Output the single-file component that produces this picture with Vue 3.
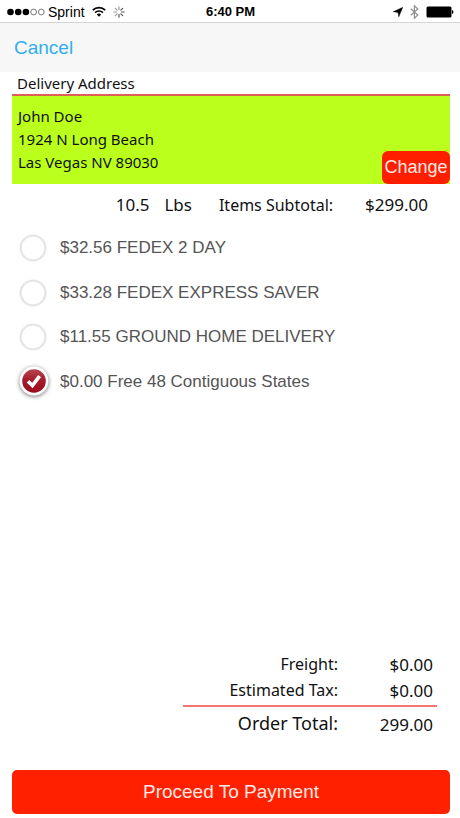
<script setup>
import { ref } from 'vue'

const shippingOptions = [
  { id: 'fedex-2day', label: '$32.56 FEDEX 2 DAY' },
  { id: 'fedex-saver', label: '$33.28 FEDEX EXPRESS SAVER' },
  { id: 'ground', label: '$11.55 GROUND HOME DELIVERY' },
  { id: 'free', label: '$0.00 Free 48 Contiguous States' },
]
const selected = ref('free')
const spokes = [0, 45, 90, 135, 180, 225, 270, 315]
</script>

<template>
  <div class="screen">
    <div class="status">
      <div class="status-left">
        <svg class="dots" width="38" height="8" viewBox="0 0 38 8" aria-hidden="true">
          <circle cx="3.5" cy="4" r="3.3" />
          <circle cx="11.2" cy="4" r="3.3" />
          <circle cx="18.9" cy="4" r="3.3" />
          <circle class="hollow" cx="26.6" cy="4" r="2.9" />
          <circle class="hollow" cx="34.3" cy="4" r="2.9" />
        </svg>
        <span class="carrier">Sprint</span>
        <svg class="wifi" width="14" height="11" viewBox="0 0 14 11" aria-hidden="true">
          <path d="M.8 4.1a8.8 8.8 0 0 1 12.4 0M3.1 6.6a5.5 5.5 0 0 1 7.8 0" fill="none" stroke="#000" stroke-width="1.7" />
          <path d="M7 10.8 4.8 8.5a3.2 3.2 0 0 1 4.4 0z" />
        </svg>
        <svg class="spinner" width="12" height="12" viewBox="-6 -6 12 12" aria-hidden="true">
          <line
            v-for="angle in spokes"
            :key="angle"
            y1="-2.6"
            y2="-5.2"
            stroke-width="1.2"
            stroke-linecap="round"
            :stroke="angle > 180 || angle === 0 ? '#999' : '#555'"
            :transform="`rotate(${angle})`"
          />
        </svg>
      </div>
      <span class="time">6:40 PM</span>
      <div class="status-right">
        <svg width="10" height="10" viewBox="0 0 10 10" aria-hidden="true">
          <path d="M9.8.3 5.8 9.8 5 5.4.2 4.7z" stroke="#000" stroke-width=".4" />
        </svg>
        <svg class="bluetooth" width="9" height="14" viewBox="0 0 9 14" aria-hidden="true">
          <path d="M.8 3.8 7.8 10 4.4 13.2V.8L7.8 4 .8 10.2" fill="none" stroke="#8e8e8e" stroke-width="1.2" />
        </svg>
        <svg width="28" height="12" viewBox="0 0 28 12" aria-hidden="true">
          <rect x=".5" y=".5" width="25" height="11" rx="1.5" />
          <path d="M26 4q1.5.3 1.5 2T26 8z" />
        </svg>
      </div>
    </div>

    <header class="nav">
      <button type="button" class="cancel">Cancel</button>
    </header>

    <main class="content">
      <h1 class="heading">Delivery Address</h1>
      <section class="address">
        <address>
          John Doe<br />
          1924 N Long Beach<br />
          Las Vegas NV 89030
        </address>
        <button type="button" class="change">Change</button>
      </section>

      <div class="summary">
        <span class="weight">10.5</span>
        <span class="unit">Lbs</span>
        <span class="subtotal-label">Items Subtotal:</span>
        <span class="amount">$299.00</span>
      </div>

      <div class="options" role="radiogroup">
        <label v-for="option in shippingOptions" :key="option.id" class="option">
          <input v-model="selected" type="radio" name="shipping" :value="option.id" />
          <svg class="mark" width="34" height="34" viewBox="0 0 34 34" aria-hidden="true">
            <g v-if="selected === option.id">
              <circle class="badge" cx="18" cy="16" r="14.4" />
              <circle cx="18" cy="16" r="11.8" fill="url(#badge-red)" />
              <path d="M12 16.2l4.4 4.4 7.2-9.4" fill="none" stroke="#fff" stroke-width="3.6" />
            </g>
            <circle v-else cx="17" cy="17" r="12.4" fill="#fff" stroke="#e6e6e6" stroke-width="2.4" />
          </svg>
          <span>{{ option.label }}</span>
        </label>
      </div>

      <dl class="totals">
        <div class="line">
          <dt>Freight:</dt>
          <dd>$0.00</dd>
        </div>
        <div class="line">
          <dt>Estimated Tax:</dt>
          <dd>$0.00</dd>
        </div>
        <div class="line total">
          <dt>Order Total:</dt>
          <dd>299.00</dd>
        </div>
      </dl>

      <button type="button" class="proceed">Proceed To Payment</button>
    </main>

    <svg class="defs" width="0" height="0" aria-hidden="true">
      <defs>
        <linearGradient id="badge-red" x1="0" y1="0" x2="0" y2="1">
          <stop offset="0" stop-color="#b84450" />
          <stop offset=".45" stop-color="#a51e2d" />
          <stop offset="1" stop-color="#9c0a1b" />
        </linearGradient>
      </defs>
    </svg>
  </div>
</template>

<style>
body {
  margin: 0;
  background: #fff;
}
</style>

<style scoped>
.screen {
  display: flex;
  flex-direction: column;
  min-height: 100vh;
  background: #fff;
  color: #111;
  font-family: "Noto Sans", sans-serif;
}
button {
  margin: 0;
  padding: 0;
  border: 0;
  font-family: "Liberation Sans", Arial, sans-serif;
}
.status {
  box-sizing: border-box;
  display: grid;
  grid-template-columns: 1fr auto 1fr;
  align-items: center;
  height: 23px;
  padding: 1px 6px 0 7px;
  border-bottom: 1px solid #d4d4d4;
  color: #000;
  font: 14px/20px "Liberation Sans", Arial, sans-serif;
}
.status-left,
.status-right {
  display: flex;
  align-items: center;
}
.status-right {
  justify-content: flex-end;
  gap: 7px;
}
.hollow {
  fill: none;
  stroke: #555;
  stroke-width: 0.8;
}
.carrier {
  margin-left: 3px;
}
.wifi,
.spinner {
  margin-left: 7px;
}
.time {
  font-size: 13px;
  font-weight: bold;
}
.nav {
  display: flex;
  align-items: center;
  height: 49px;
  padding: 0 14px;
  background: #f7f7f7;
}
.cancel {
  background: none;
  color: #34aeeb;
  font-size: 19px;
}
.content {
  display: flex;
  flex: 1;
  flex-direction: column;
  padding: 0 10px 4px 12px;
}
.heading {
  margin: 0;
  padding-left: 5px;
  border-bottom: 2px solid #dd5f58;
  font-size: 15px;
  font-weight: 400;
  line-height: 22px;
}
.address {
  display: flex;
  justify-content: space-between;
  align-items: flex-end;
  background: #bbff1c;
}
address {
  padding: 9px 6px 10px;
  font-size: 15px;
  font-style: normal;
  line-height: 23px;
}
.change {
  width: 68px;
  height: 33px;
  border-radius: 6px;
  background: #ff1e00;
  color: #ffe9e0;
  font-size: 18px;
}
.summary {
  display: flex;
  justify-content: flex-end;
  align-items: baseline;
  padding: 8px 22px 8px 0;
  font-size: 17px;
  line-height: 25px;
}
.unit {
  margin-left: 15px;
}
.subtotal-label {
  margin-left: 27px;
  font-size: 16px;
}
.amount {
  margin-left: 32px;
}
.options {
  display: grid;
  grid-template-rows: repeat(4, 1fr);
  min-height: 178px;
}
.option {
  position: relative;
  display: flex;
  align-items: center;
  gap: 10px;
  padding-left: 4px;
  color: #555;
  font: 17px/24px "Liberation Sans", Arial, sans-serif;
}
.option input {
  position: absolute;
  width: 34px;
  height: 34px;
  margin: 0;
  opacity: 0;
}
.mark {
  overflow: visible;
}
.badge {
  fill: #fff;
  filter: drop-shadow(0 1px 2px rgba(0, 0, 0, 0.55));
}
.totals {
  align-self: flex-end;
  width: 58%;
  margin: auto 13px 31px 0;
}
.line {
  display: flex;
  justify-content: flex-end;
  align-items: flex-start;
  padding-right: 4px;
  font-size: 16px;
  line-height: 24px;
}
.line dd {
  width: 95px;
  margin: 0;
  font-size: 17px;
  line-height: 26px;
  text-align: right;
}
.total {
  margin-top: 1px;
  padding-top: 4px;
  border-top: 2px solid #f37575;
  font-size: 18px;
}
.total dd {
  line-height: 28px;
}
.proceed {
  height: 44px;
  border-radius: 5px;
  background: #ff2000;
  color: #ffe9e0;
  font-size: 19px;
}
.defs {
  position: absolute;
}
</style>
